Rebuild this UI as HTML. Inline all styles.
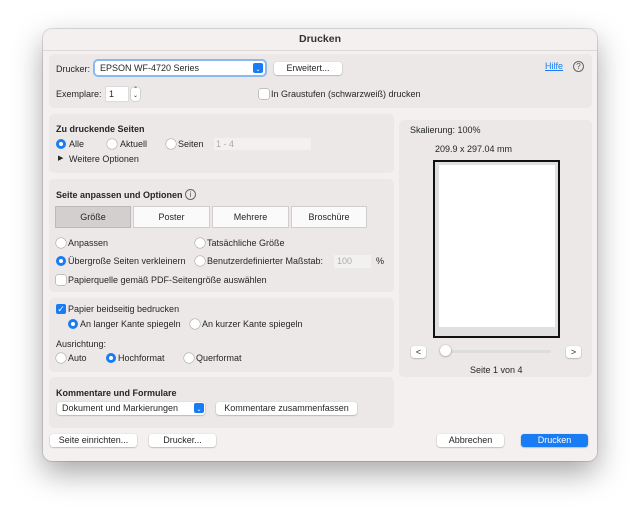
<!DOCTYPE html>
<html><head><meta charset="utf-8"><style>
*{box-sizing:border-box;margin:0;padding:0}
body{width:640px;height:517px;background:#fff;font-family:"Liberation Sans",sans-serif;font-size:9px;color:#262626;position:relative;overflow:hidden}
.win{position:absolute;left:43px;top:29px;width:554px;height:432px;background:#f3f0ef;border-radius:9px;box-shadow:0 12px 30px rgba(0,0,0,.35),0 0 0 1px rgba(0,0,0,.12)}
.a{position:absolute;white-space:nowrap}
.box{position:absolute;background:#ebe8e7;border-radius:5px}
.btn{position:absolute;background:#fff;border-radius:3px;box-shadow:0 0.5px 1.5px rgba(0,0,0,.35);text-align:center;line-height:13px;height:13px}
.r{position:absolute;width:10px;height:10px;border-radius:50%;background:#fff;box-shadow:0 0 0 .5px rgba(0,0,0,.3)}
.r.on{background:#1a7cf5;box-shadow:none}
.r.on::after{content:"";position:absolute;left:3px;top:3px;width:4px;height:4px;border-radius:50%;background:#fff}
.cb{position:absolute;width:10px;height:10px;border-radius:2px;background:#fff;box-shadow:0 0 0 .5px rgba(0,0,0,.35)}
.b{font-weight:bold}
.seg{position:absolute;top:206px;height:22px;background:#fbfafa;border:1px solid #d0cdcc;text-align:center;line-height:20px}
</style></head><body>
<div class="win">
<div class="a b" style="left:0;width:554px;text-align:center;top:4px;font-size:10.5px;color:#333">Drucken</div>
<div class="a" style="left:0;top:21px;width:554px;height:1px;background:#dcd9d8"></div>
</div>
<!-- boxes -->
<div class="box" style="left:49px;top:54px;width:543px;height:54px"></div>
<div class="box" style="left:49px;top:114px;width:345px;height:59px"></div>
<div class="box" style="left:49px;top:179px;width:345px;height:113px"></div>
<div class="box" style="left:49px;top:298px;width:345px;height:74px"></div>
<div class="box" style="left:49px;top:377px;width:345px;height:51px"></div>
<div class="box" style="left:399px;top:120px;width:193px;height:257px"></div>

<div class="a" style="left:56px;top:64px">Drucker:</div>
<div class="a" style="left:95px;top:61px;width:170px;height:14px;background:#fff;border-radius:3px;box-shadow:0 0 0 2px #8bb8f3;padding-left:5px;line-height:14px">EPSON WF-4720 Series</div>
<div class="a" style="left:253px;top:63px;width:10px;height:10px;background:#1a7cf5;border-radius:2px;color:#fff;font-size:6px;text-align:center;line-height:5px">⌃<br>⌄</div>
<div class="btn" style="left:274px;top:62px;width:68px">Erweitert...</div>
<div class="a" style="left:545px;top:61px;color:#1a7cf5;text-decoration:underline">Hilfe</div>
<div class="a" style="left:573px;top:61px;width:11px;height:11px;border:1px solid #666;border-radius:50%;font-size:8px;text-align:center;line-height:9px;color:#555">?</div>

<div class="a" style="left:56px;top:89px">Exemplare:</div>
<div class="a" style="left:106px;top:87px;width:22px;height:14px;background:#fff;box-shadow:0 0 0 .5px #ccc;padding-left:3px;line-height:14px">1</div>
<div class="a" style="left:131px;top:87px;width:9px;height:14px;background:#fff;border-radius:3px;box-shadow:0 0 0 .5px #bbb;font-size:6px;text-align:center;line-height:6px">⌃<br>⌄</div>
<div class="cb" style="left:259px;top:89px"></div>
<div class="a" style="left:271px;top:89px">In Graustufen (schwarzweiß) drucken</div>

<div class="a b" style="left:56px;top:124px">Zu druckende Seiten</div>
<div class="r on" style="left:56px;top:139px"></div><div class="a" style="left:69px;top:139px">Alle</div>
<div class="r" style="left:107px;top:139px"></div><div class="a" style="left:120px;top:139px">Aktuell</div>
<div class="r" style="left:166px;top:139px"></div><div class="a" style="left:178px;top:139px">Seiten</div>
<div class="a" style="left:214px;top:138px;width:97px;height:12px;background:#f3f1f0;color:#aaa;padding-left:2px;line-height:12px">1 - 4</div>
<div class="a" style="left:58px;top:154px;font-size:7px">▶</div><div class="a" style="left:69px;top:154px">Weitere Optionen</div>

<div class="a b" style="left:56px;top:190px">Seite anpassen und Optionen</div>
<div class="a" style="left:185px;top:189px;width:11px;height:11px;border:1px solid #666;border-radius:50%;font-size:8px;text-align:center;line-height:9px;color:#555">i</div>
<div class="seg" style="left:55px;width:76px;background:#d2cfce;border-color:#bcb9b8">Größe</div>
<div class="seg" style="left:133px;width:77px">Poster</div>
<div class="seg" style="left:212px;width:77px">Mehrere</div>
<div class="seg" style="left:291px;width:76px">Broschüre</div>
<div class="r" style="left:56px;top:238px"></div><div class="a" style="left:68px;top:238px">Anpassen</div>
<div class="r" style="left:195px;top:238px"></div><div class="a" style="left:207px;top:238px">Tatsächliche Größe</div>
<div class="r on" style="left:56px;top:256px"></div><div class="a" style="left:68px;top:256px">Übergroße Seiten verkleinern</div>
<div class="r" style="left:195px;top:256px"></div><div class="a" style="left:207px;top:256px">Benutzerdefinierter Maßstab:</div>
<div class="a" style="left:334px;top:255px;width:37px;height:13px;background:#f3f1f0;color:#aaa;padding-left:3px;line-height:13px">100</div>
<div class="a" style="left:376px;top:256px">%</div>
<div class="cb" style="left:56px;top:275px"></div><div class="a" style="left:68px;top:275px">Papierquelle gemäß PDF-Seitengröße auswählen</div>

<div class="cb" style="left:56px;top:304px;background:#1a7cf5;box-shadow:none;color:#fff;font-size:9px;text-align:center;line-height:10px">✓</div>
<div class="a" style="left:68px;top:304px">Papier beidseitig bedrucken</div>
<div class="r on" style="left:68px;top:319px"></div><div class="a" style="left:80px;top:319px">An langer Kante spiegeln</div>
<div class="r" style="left:190px;top:319px"></div><div class="a" style="left:202px;top:319px">An kurzer Kante spiegeln</div>
<div class="a" style="left:56px;top:339px">Ausrichtung:</div>
<div class="r" style="left:56px;top:353px"></div><div class="a" style="left:68px;top:353px">Auto</div>
<div class="r on" style="left:106px;top:353px"></div><div class="a" style="left:118px;top:353px">Hochformat</div>
<div class="r" style="left:184px;top:353px"></div><div class="a" style="left:196px;top:353px">Querformat</div>

<div class="a b" style="left:56px;top:388px">Kommentare und Formulare</div>
<div class="btn" style="left:57px;top:402px;width:148px;text-align:left;padding-left:5px">Dokument und Markierungen</div>
<div class="a" style="left:194px;top:403px;width:10px;height:10px;background:#1a7cf5;border-radius:2px;color:#fff;font-size:6px;text-align:center;line-height:5px">⌃<br>⌄</div>
<div class="btn" style="left:216px;top:402px;width:141px">Kommentare zusammenfassen</div>

<div class="a" style="left:410px;top:125px">Skalierung: 100%</div>
<div class="a" style="left:435px;top:144px">209.9 x 297.04 mm</div>
<div class="a" style="left:433px;top:160px;width:127px;height:178px;border:2px solid #111;background:#e0e0e0"></div>
<div class="a" style="left:439px;top:165px;width:116px;height:162px;background:#fff"></div>
<div class="btn" style="left:411px;top:346px;width:15px;height:12px;line-height:12px">&lt;</div>
<div class="a" style="left:440px;top:350px;width:111px;height:3px;background:#ddd;border-radius:2px"></div>
<div class="a" style="left:440px;top:345px;width:11px;height:11px;border-radius:50%;background:#fff;box-shadow:0 0.5px 2px rgba(0,0,0,.4)"></div>
<div class="btn" style="left:566px;top:346px;width:15px;height:12px;line-height:12px">&gt;</div>
<div class="a" style="left:470px;top:365px">Seite 1 von 4</div>

<div class="btn" style="left:50px;top:434px;width:87px">Seite einrichten...</div>
<div class="btn" style="left:149px;top:434px;width:67px">Drucker...</div>
<div class="btn" style="left:437px;top:434px;width:67px">Abbrechen</div>
<div class="btn" style="left:521px;top:434px;width:67px;background:#1a7cf5;color:#fff">Drucken</div>
</body></html>
